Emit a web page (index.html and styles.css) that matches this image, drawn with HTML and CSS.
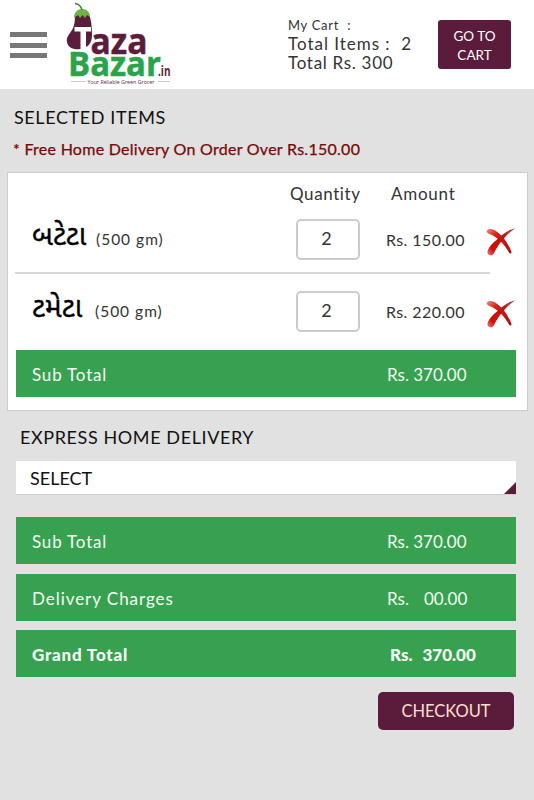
FILE: index.html
```html
<!DOCTYPE html>
<html lang="en">
<head>
<meta charset="utf-8">
<title>Taza Bazar - Cart</title>
<link rel="stylesheet" href="styles.css">
</head>
<body>
<svg class="defs" width="0" height="0" aria-hidden="true">
  <defs>
    <linearGradient id="red" x1="0" y1="0" x2="1" y2="1">
      <stop offset="0" stop-color="#f09090"/><stop offset=".3" stop-color="#d81c14"/><stop offset="1" stop-color="#b40c08"/>
    </linearGradient>
    <linearGradient id="red2" x1="1" y1="0" x2="0" y2="1">
      <stop offset="0" stop-color="#9a6060"/><stop offset=".35" stop-color="#c01410"/><stop offset=".8" stop-color="#d01008"/><stop offset="1" stop-color="#ee8080"/>
    </linearGradient>
    <symbol id="cross" viewBox="0 0 30 28">
      <path fill="url(#red)" d="M0.500 3C2 0 7 0.500 10 3C17 8 22 15 25.500 24C25.500 26 24 26 23 24.500C19 17 13 11 7 7.500C4 6 1 6 0.500 3Z"/>
      <path fill="url(#red2)" d="M29 0.500C22 5 13 15 8 25C7 28 3 28 1.500 25.500C1 20 7 15 12 10.500C17 6 22 1.500 29 0.500Z"/>
    </symbol>
  </defs>
</svg>
<header class="header">
  <div class="menu"><i></i><i></i><i></i></div>
  <svg class="logo" width="112" height="88" viewBox="0 0 112 88">
    <path d="M12 15C12 23 11 28 7 33C4 37 3.500 39 4 42C5 48 11 50 17 49C25 48 29 43 29 35C29 26 28 19 26 14Z" fill="#5b1d3c"/>
    <path d="M11 18C11 12 15 9 19 9C24 9 27 12 27 17L24 15L22 18L19.500 15L17 18L15 15Z" fill="#6cb545"/>
    <path d="M19 10C18 6 16 4 12 3.500" fill="none" stroke="#3f7a35" stroke-width="1.500"/>
    <path d="M11.500 27H28V31.500H23V49H17.500V31.500H11.500Z" fill="#fff"/>
    <text class="logo-taza" x="27.500" y="53.500" textLength="57" lengthAdjust="spacingAndGlyphs">aza</text>
    <text class="logo-bazar" x="5" y="75.500" textLength="93" lengthAdjust="spacingAndGlyphs">Bazar</text>
    <text class="logo-in" x="95" y="76" textLength="12.500" lengthAdjust="spacingAndGlyphs">.in</text>
    <path d="M8 81.500H23M95 81.500H107" stroke="#ccc"/>
    <text class="logo-tag" x="24.500" y="83.500" textLength="67" lengthAdjust="spacingAndGlyphs">Your Reliable Green Grocer</text>
  </svg>
  <div class="cart">
    <div class="cart-title">My Cart&nbsp; :</div>
    <div class="cart-items">Total Items :&nbsp; 2</div>
    <div class="cart-total">Total Rs. 300</div>
  </div>
  <button class="go">GO TO<br>CART</button>
</header>
<main>
  <h2 class="title">SELECTED ITEMS</h2>
  <p class="notice">* Free Home Delivery On Order Over Rs.150.00</p>
  <section class="card">
    <div class="row head"><span></span><span class="quantity">Quantity</span><span class="amount-head">Amount</span></div>
    <div class="row item">
      <div class="name"><span class="gu" lang="gu">બટેટા</span><span class="gm">(500 gm)</span></div>
      <div class="qty">2</div><div class="amount">Rs. 150.00</div>
      <svg class="cross" width="30" height="28"><use href="#cross"/></svg>
    </div>
    <div class="line"></div>
    <div class="row item second">
      <div class="name"><span class="gu" lang="gu">ટમેટા</span><span class="gm">(500 gm)</span></div>
      <div class="qty">2</div><div class="amount">Rs. 220.00</div>
      <svg class="cross" width="30" height="28"><use href="#cross"/></svg>
    </div>
    <div class="bar"><span class="sub">Sub Total</span><span class="value">Rs. 370.00</span></div>
  </section>
  <h2 class="title express">EXPRESS HOME DELIVERY</h2>
  <div class="select">SELECT</div>
  <div class="totals">
    <div class="bar"><span class="sub">Sub Total</span><span class="value">Rs. 370.00</span></div>
    <div class="bar"><span class="charges">Delivery Charges</span><span class="value zero">Rs.<b>00.00</b></span></div>
    <div class="bar grand"><span class="grand-label">Grand Total</span><span class="value">Rs.<b>370.00</b></span></div>
  </div>
  <button class="checkout">CHECKOUT</button>
</main>
</body>
</html>
```

FILE: styles.css
```css
* { box-sizing: border-box; }
body { margin: 0; height: 800px; background: #e1e1e1; color: #333; font-family: Lato, "Noto Sans", "Noto Sans Gujarati", sans-serif; font-size: 17px; overflow: hidden; }
.defs { display: block; height: 0; }
.header { display: flex; align-items: flex-start; height: 89px; background: #fff; }
.menu { display: grid; gap: 5.500px; margin: 32px 0 0 10px; width: 37px; }
.menu i { height: 5px; background: #777; }
.logo { margin-left: 16px; flex: none; font-family: "Open Sans", sans-serif; }
.logo-taza { font-size: 36.500px; font-weight: 700; fill: #5b1d3c; stroke: #5b1d3c; stroke-width: .5px; }
.logo-bazar { font-size: 34px; font-weight: 700; fill: #2ba34a; stroke: #2ba34a; stroke-width: .5px; }
.logo-in { font-size: 14px; font-weight: 700; fill: #5b1d3c; }
.logo-tag { font-size: 5.500px; fill: #5b1d3c; }
.cart { margin: 16px 0 0 113px; width: 150px; line-height: 19px; white-space: nowrap; }
.cart-title { font-size: 13px; line-height: 19px; letter-spacing: .7px; }
.cart-items { letter-spacing: .98px; line-height: 18px; }
.cart-total { letter-spacing: .7px; }
button { border: 0; background: #5b1c3b; color: #fff; font-family: inherit; padding: 0; }
.go { width: 73px; height: 49px; margin-top: 20px; border-radius: 3px; font-size: 13.500px; line-height: 19px; padding-top: 3px; }
.title { margin: 0; padding: 17px 0 0 14px; font-size: 18px; line-height: 22px; font-weight: 400; color: #111; letter-spacing: .6px; }
.notice { margin: 10px 0 0 13px; font-size: 16px; line-height: 22px; color: #780808; -webkit-text-stroke: .25px #780808; white-space: nowrap; letter-spacing: .27px; }
.card { margin: 12px 6px 0 7px; height: 239px; background: #fff; border: 1px solid #ccc; padding: 0 10px 0 8px; }
.row { display: grid; grid-template-columns: 280px 90px 100px 30px; align-items: center; white-space: nowrap; }
.head { height: 33px; padding-top: 7px; }
.quantity { margin-left: -6px; letter-spacing: .6px; }
.amount-head { margin-left: 5px; letter-spacing: .75px; }
.item { height: 66px; }
.name { padding-left: 16px; display: flex; align-items: baseline; margin-top: -11px; }
.gu { font-size: 28.500px; color: #000; -webkit-text-stroke: .4px #000; width: 64px; line-height: 34px; }
.gm { font-size: 15.500px; letter-spacing: 1px; }
.second .gu { width: 63px; }
.qty { width: 64px; height: 41px; border: 2px solid #ccc; border-radius: 5px; text-align: center; line-height: 35px; font-size: 18px; padding-right: 3px; }
.amount { font-size: 16px; letter-spacing: .4px; }
.cross { margin-top: 5px; }
.line { height: 2px; width: 475px; background: #d5d5d5; margin-left: -1px; }
.second { height: 74px; margin-bottom: 2px; }
.bar { display: flex; align-items: center; justify-content: space-between; height: 47px; width: 500px; padding: 2px 0 0 16px; background: #37a150; color: #f4fff6; white-space: nowrap; }
.sub { letter-spacing: .8px; }
.charges { letter-spacing: .95px; }
.grand-label { letter-spacing: .8px; }
.value { width: 129px; }
.value b { font-weight: inherit; margin-left: 15px; }
.express { padding: 15px 0 0 20px; }
.select { position: relative; width: 500px; height: 34px; margin: 13px 0 0 16px; padding: 0 14px; line-height: 35px; font-size: 18px; background: #fff; color: #111; border-bottom: 1px solid #ccc; }
.select::after { content: ""; position: absolute; right: 0; bottom: 0; border-left: 12px solid transparent; border-bottom: 12px solid #5b1c3b; }
.totals { display: grid; gap: 9.500px; margin: 22px 0 0 16px; }
.grand { font-weight: 900; }
.grand .value { width: 126px; }
.grand b { margin-left: 10px; }
.checkout { display: block; width: 136px; height: 38px; margin: 15px 0 0 378px; border-radius: 5px; font-size: 16.500px; color: #fbdfd0; }
```
